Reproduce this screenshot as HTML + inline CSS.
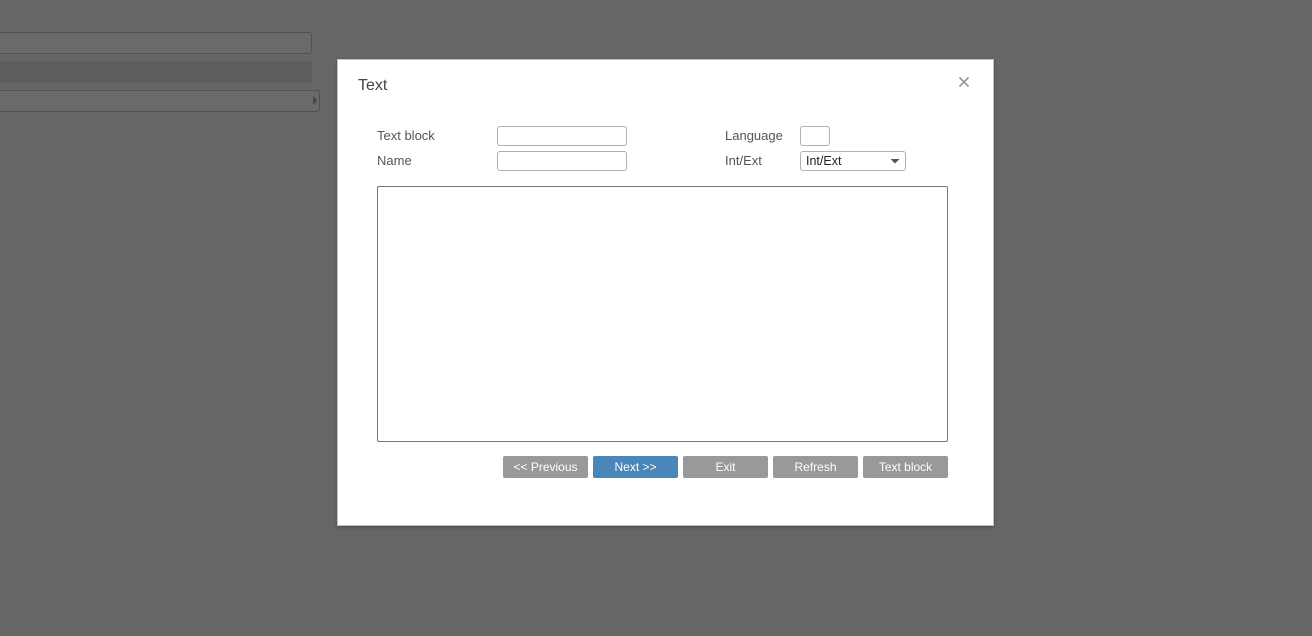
<!DOCTYPE html>
<html>
<head>
<meta charset="utf-8">
<style>
html,body{margin:0;padding:0;width:1312px;height:636px;overflow:hidden;background:#666;font-family:"Liberation Sans",Arial,sans-serif;}
.a{position:absolute;box-sizing:border-box;}
.t{position:absolute;font-size:13px;line-height:16px;color:#555;white-space:nowrap;}
.i{position:absolute;box-sizing:border-box;border:1px solid #b0b0b0;border-radius:3px;background:#fff;height:20px;}
.b{position:absolute;box-sizing:border-box;top:456px;width:85px;height:22px;border-radius:2px;background:#999;color:#fff;font-size:12px;line-height:22px;text-align:center;white-space:nowrap;}
</style>
</head>
<body>
<div class="a" style="left:-6px;top:32px;width:318px;height:22px;border:1px solid #505050;border-radius:3px;background:#6a6a6a;"></div>
<div class="a" style="left:-6px;top:61px;width:318px;height:22px;border-radius:3px;background:#5d5d5d;"></div>
<div class="a" style="left:-6px;top:90px;width:326px;height:22px;border:1px solid #505050;border-radius:3px;background:#6a6a6a;"></div>
<svg class="a" style="left:312px;top:95px;" width="6" height="11"><path d="M1 1L5.5 5.5L1 10Z" fill="#4a4a4a"/></svg>

<div class="a" style="left:337px;top:59px;width:657px;height:467px;background:#fff;border:1px solid #c4c4c4;box-shadow:0 1px 3px rgba(0,0,0,.3);"></div>
<div class="t" style="left:358px;top:76px;font-size:16px;line-height:20px;color:#444;">Text</div>
<svg class="a" style="left:958px;top:76px;" width="12" height="12"><path d="M1.5 1.5L10.5 10.5M10.5 1.5L1.5 10.5" stroke="#999" stroke-width="1.7" fill="none"/></svg>

<div class="t" style="left:377px;top:128px;">Text block</div>
<div class="t" style="left:377px;top:153px;">Name</div>
<div class="i" style="left:497px;top:126px;width:130px;"></div>
<div class="i" style="left:497px;top:151px;width:130px;"></div>
<div class="t" style="left:725px;top:128px;">Language</div>
<div class="t" style="left:725px;top:153px;">Int/Ext</div>
<div class="i" style="left:800px;top:126px;width:30px;"></div>
<div class="i" style="left:800px;top:151px;width:106px;"></div>
<div class="t" style="left:806px;top:153px;color:#222;font-size:12.5px;">Int/Ext</div>
<svg class="a" style="left:890px;top:158px;" width="10" height="6"><path d="M0.5 1L9.5 1L5 5.5Z" fill="#555"/></svg>

<div class="a" style="left:377px;top:186px;width:571px;height:256px;border:1px solid #777;border-radius:2px;background:#fff;"></div>

<div class="b" style="left:503px;">&lt;&lt; Previous</div>
<div class="b" style="left:593px;background:#4a86b8;">Next &gt;&gt;</div>
<div class="b" style="left:683px;">Exit</div>
<div class="b" style="left:773px;">Refresh</div>
<div class="b" style="left:863px;">Text block</div>
</body>
</html>
